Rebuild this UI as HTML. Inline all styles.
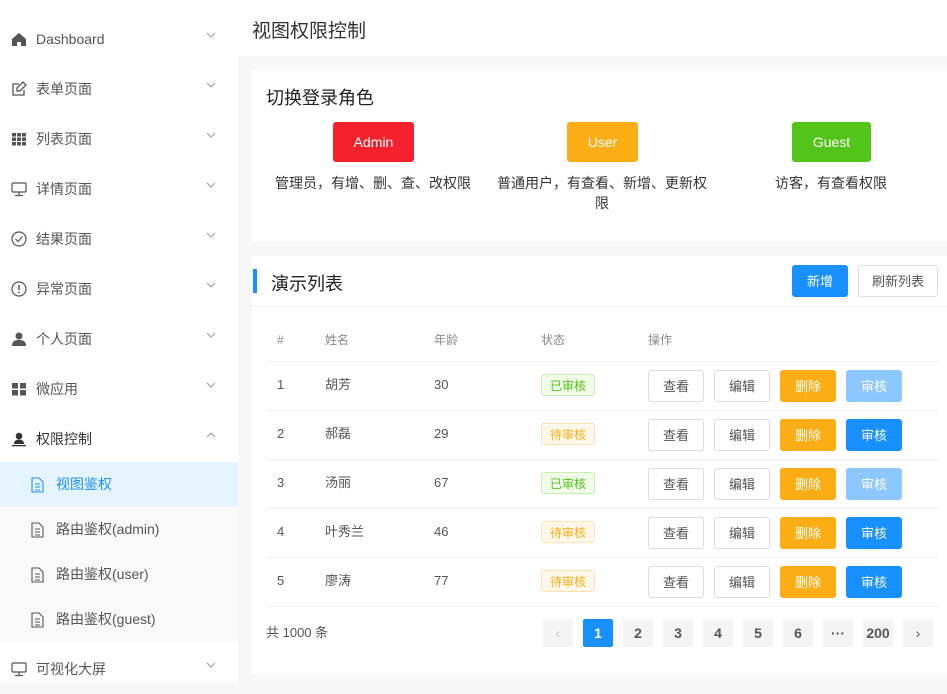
<!DOCTYPE html>
<html><head><meta charset="utf-8"><style>
*{box-sizing:border-box;margin:0;padding:0}
body{width:947px;height:683px;overflow:hidden;background:#f7f7f7;font-family:"Liberation Sans","Noto Sans CJK SC",sans-serif;color:#333;position:relative}
.abs{position:absolute}
#side{left:0;top:0;width:238px;height:683px;background:#fff}
.mi{position:absolute;left:0;width:238px;height:50px;font-size:14px;color:#555}
.mi .ic{position:absolute;left:11px;width:16px;height:16px;top:17px}
.mi .tx{position:absolute;left:36px;top:15px;line-height:20px}
.mi .ch{position:absolute;left:204px;top:16px;width:14px;height:10px}
.sub{position:absolute;left:0;width:238px;height:45px;font-size:14px;color:#555}
.sub .tx{position:absolute;left:56px;top:12px;line-height:20px}
.sub svg{position:absolute;left:31px;top:15px}
.card{position:absolute;background:#fff;left:252px;width:695px}
.btn{position:absolute;height:32px;border-radius:3px;font-size:13px;display:flex;align-items:center;justify-content:center;line-height:1}
.wb{border:1px solid #ddd;color:#555;background:#fff}
.tag{position:absolute;width:54px;height:22px;border-radius:3px;font-size:12px;display:flex;align-items:center;justify-content:center}
.g{background:#f0fbe8;border:1px solid #c9edb0;color:#52c41a}
.o{background:#fff8ea;border:1px solid #ffe2ad;color:#faad14}
.cell{position:absolute;font-size:13px;color:#555;line-height:20px;height:20px}
.pg{position:absolute;top:619px;width:30px;height:28px;background:#f4f4f5;border-radius:2px;font-size:14px;font-weight:bold;color:#555;display:flex;align-items:center;justify-content:center}
.line{position:absolute;left:266px;width:672px;height:1px;background:#ebeef5}
</style></head><body>
<svg width="0" height="0" style="position:absolute"><defs><symbol id="dn" viewBox="0 0 14 10"><path d="M3 3l4 4 4-4" fill="none" stroke="#999" stroke-width="1"/></symbol><symbol id="up" viewBox="0 0 14 10"><path d="M3 7l4-4 4 4" fill="none" stroke="#999" stroke-width="1"/></symbol></defs></svg>
<div id="side" class="abs">
 <div class="mi" style="top:14px"><svg class="ic" viewBox="0 0 16 16"><path d="M8 2L1 8v7h5v-4h4v4h5V8z" fill="#555"/></svg><span class="tx">Dashboard</span><svg class="ch"><use href="#dn"/></svg></div>
 <div class="mi" style="top:64px"><svg class="ic" viewBox="0 0 16 16"><path d="M13 9v5H2V3h6M12 1l3 3-6 6H6V7z" fill="none" stroke="#555" stroke-width="1.3"/></svg><span class="tx">表单页面</span><svg class="ch"><use href="#dn"/></svg></div>
 <div class="mi" style="top:114px"><svg class="ic" viewBox="0 0 16 16" fill="#555"><rect x="1" y="2" width="4" height="3.5"/><rect x="6" y="2" width="4" height="3.5"/><rect x="11" y="2" width="4" height="3.5"/><rect x="1" y="6.5" width="4" height="3.5"/><rect x="6" y="6.5" width="4" height="3.5"/><rect x="11" y="6.5" width="4" height="3.5"/><rect x="1" y="11" width="4" height="3.5"/><rect x="6" y="11" width="4" height="3.5"/><rect x="11" y="11" width="4" height="3.5"/></svg><span class="tx">列表页面</span><svg class="ch"><use href="#dn"/></svg></div>
 <div class="mi" style="top:164px"><svg class="ic" viewBox="0 0 16 16"><rect x="1" y="2" width="14" height="9" rx="1" fill="none" stroke="#555" stroke-width="1.2"/><path d="M8 11v3M4 14.5h8" stroke="#555" stroke-width="1.2"/></svg><span class="tx">详情页面</span><svg class="ch"><use href="#dn"/></svg></div>
 <div class="mi" style="top:214px"><svg class="ic" viewBox="0 0 16 16"><circle cx="8" cy="8" r="7" fill="none" stroke="#555" stroke-width="1.2"/><path d="M4.5 8l2.5 2.5 4.5-5" fill="none" stroke="#555" stroke-width="1.2"/></svg><span class="tx">结果页面</span><svg class="ch"><use href="#dn"/></svg></div>
 <div class="mi" style="top:264px"><svg class="ic" viewBox="0 0 16 16"><circle cx="8" cy="8" r="7" fill="none" stroke="#555" stroke-width="1.2"/><path d="M8 4v5" stroke="#555" stroke-width="1.5"/><circle cx="8" cy="11.5" r=".9" fill="#555"/></svg><span class="tx">异常页面</span><svg class="ch"><use href="#dn"/></svg></div>
 <div class="mi" style="top:314px"><svg class="ic" viewBox="0 0 16 16" fill="#555"><circle cx="8" cy="5" r="3.5"/><path d="M1 15c0-5 3-6 7-6s7 1 7 6z"/></svg><span class="tx">个人页面</span><svg class="ch"><use href="#dn"/></svg></div>
 <div class="mi" style="top:364px"><svg class="ic" viewBox="0 0 16 16" fill="#555"><rect x="1" y="2" width="6" height="5.5"/><rect x="9" y="2" width="6" height="5.5"/><rect x="1" y="9" width="6" height="5.5"/><rect x="9" y="9" width="6" height="5.5"/></svg><span class="tx">微应用</span><svg class="ch"><use href="#dn"/></svg></div>
 <div class="mi" style="top:414px;color:#333"><svg class="ic" viewBox="0 0 16 16" fill="#333"><circle cx="8" cy="5" r="3.3"/><path d="M3 13c0-3 2-4.5 5-4.5s5 1.5 5 4.5z"/><rect x="1" y="14" width="14" height="1.3"/></svg><span class="tx">权限控制</span><svg class="ch"><use href="#up"/></svg></div>
 <div class="abs" style="left:0;top:462px;width:238px;height:179px;background:#f9f9f9"></div>
 <div class="sub" style="top:462px;background:#e6f4ff;color:#1890ff"><svg width="13" height="16" viewBox="0 0 13 16"><path d="M1 1h7l4 4v10H1z M4 7h5M4 10h5M4 13h5" fill="none" stroke="#1890ff" stroke-width="1.1"/></svg><span class="tx">视图鉴权</span></div>
 <div class="sub" style="top:507px"><svg width="13" height="16" viewBox="0 0 13 16"><path d="M1 1h7l4 4v10H1z M4 7h5M4 10h5M4 13h5" fill="none" stroke="#555" stroke-width="1.1"/></svg><span class="tx">路由鉴权(admin)</span></div>
 <div class="sub" style="top:552px"><svg width="13" height="16" viewBox="0 0 13 16"><path d="M1 1h7l4 4v10H1z M4 7h5M4 10h5M4 13h5" fill="none" stroke="#555" stroke-width="1.1"/></svg><span class="tx">路由鉴权(user)</span></div>
 <div class="sub" style="top:597px"><svg width="13" height="16" viewBox="0 0 13 16"><path d="M1 1h7l4 4v10H1z M4 7h5M4 10h5M4 13h5" fill="none" stroke="#555" stroke-width="1.1"/></svg><span class="tx">路由鉴权(guest)</span></div>
 <div class="mi" style="top:644px"><svg class="ic" viewBox="0 0 16 16"><rect x="1" y="2" width="14" height="9" rx="1" fill="none" stroke="#555" stroke-width="1.2"/><path d="M8 11v3M4 14.5h8" stroke="#555" stroke-width="1.2"/></svg><span class="tx">可视化大屏</span><svg class="ch"><use href="#dn"/></svg></div>
</div>
<div class="abs" style="left:238px;top:0;width:709px;height:56px;background:#fff"></div>
<div class="abs" style="left:252px;top:16px;font-size:19px;color:#333">视图权限控制</div>

<div class="card" style="top:70px;height:171px">
 <div class="abs" style="left:14px;top:14px;font-size:18px;color:#222">切换登录角色</div>
 <div class="btn" style="left:81px;top:52px;width:81px;height:40px;background:#f5222d;color:#fff;font-size:14px">Admin</div>
 <div class="btn" style="left:315px;top:52px;width:71px;height:40px;background:#faad14;color:#fff;font-size:14px">User</div>
 <div class="btn" style="left:540px;top:52px;width:79px;height:40px;background:#52c41a;color:#fff;font-size:14px">Guest</div>
 <div class="abs" style="left:16px;top:103px;width:210px;text-align:center;font-size:14px;line-height:20px;color:#333">管理员，有增、删、查、改权限</div>
 <div class="abs" style="left:240px;top:103px;width:220px;text-align:center;font-size:14px;line-height:20px;color:#333">普通用户，有查看、新增、更新权限</div>
 <div class="abs" style="left:474px;top:103px;width:210px;text-align:center;font-size:14px;line-height:20px;color:#333">访客，有查看权限</div>
</div>

<div class="card" style="top:256px;height:418px"></div>
<div class="abs" style="left:253px;top:269px;width:4px;height:24px;background:#1890ff"></div>
<div class="abs" style="left:271px;top:270px;font-size:18px;color:#222">演示列表</div>
<div class="btn" style="left:792px;top:265px;width:56px;background:#1890ff;color:#fff">新增</div>
<div class="btn wb" style="left:858px;top:265px;width:80px">刷新列表</div>
<div class="abs" style="left:252px;top:306px;width:695px;height:1px;background:#ebeef5"></div>

<div class="cell" style="left:277px;top:330px;font-size:12px;color:#888">#</div>
<div class="cell" style="left:325px;top:330px;font-size:12px;color:#888">姓名</div>
<div class="cell" style="left:434px;top:330px;font-size:12px;color:#888">年龄</div>
<div class="cell" style="left:541px;top:330px;font-size:12px;color:#888">状态</div>
<div class="cell" style="left:648px;top:330px;font-size:12px;color:#888">操作</div>
<div class="line" style="top:361px"></div>

<div class="cell" style="left:277px;top:375px">1</div><div class="cell" style="left:325px;top:375px">胡芳</div><div class="cell" style="left:434px;top:375px">30</div>
<div class="tag g" style="left:541px;top:374px">已审核</div>
<div class="btn wb" style="left:648px;top:370px;width:56px">查看</div><div class="btn wb" style="left:714px;top:370px;width:56px">编辑</div><div class="btn" style="left:780px;top:370px;width:56px;background:#faad14;color:#fff">删除</div><div class="btn" style="left:846px;top:370px;width:56px;background:#8cc8ff;color:#fff">审核</div>
<div class="line" style="top:410px"></div>

<div class="cell" style="left:277px;top:424px">2</div><div class="cell" style="left:325px;top:424px">郝磊</div><div class="cell" style="left:434px;top:424px">29</div>
<div class="tag o" style="left:541px;top:423px">待审核</div>
<div class="btn wb" style="left:648px;top:419px;width:56px">查看</div><div class="btn wb" style="left:714px;top:419px;width:56px">编辑</div><div class="btn" style="left:780px;top:419px;width:56px;background:#faad14;color:#fff">删除</div><div class="btn" style="left:846px;top:419px;width:56px;background:#1890ff;color:#fff">审核</div>
<div class="line" style="top:459px"></div>

<div class="cell" style="left:277px;top:473px">3</div><div class="cell" style="left:325px;top:473px">汤丽</div><div class="cell" style="left:434px;top:473px">67</div>
<div class="tag g" style="left:541px;top:472px">已审核</div>
<div class="btn wb" style="left:648px;top:468px;width:56px">查看</div><div class="btn wb" style="left:714px;top:468px;width:56px">编辑</div><div class="btn" style="left:780px;top:468px;width:56px;background:#faad14;color:#fff">删除</div><div class="btn" style="left:846px;top:468px;width:56px;background:#8cc8ff;color:#fff">审核</div>
<div class="line" style="top:508px"></div>

<div class="cell" style="left:277px;top:522px">4</div><div class="cell" style="left:325px;top:522px">叶秀兰</div><div class="cell" style="left:434px;top:522px">46</div>
<div class="tag o" style="left:541px;top:521px">待审核</div>
<div class="btn wb" style="left:648px;top:517px;width:56px">查看</div><div class="btn wb" style="left:714px;top:517px;width:56px">编辑</div><div class="btn" style="left:780px;top:517px;width:56px;background:#faad14;color:#fff">删除</div><div class="btn" style="left:846px;top:517px;width:56px;background:#1890ff;color:#fff">审核</div>
<div class="line" style="top:557px"></div>

<div class="cell" style="left:277px;top:571px">5</div><div class="cell" style="left:325px;top:571px">廖涛</div><div class="cell" style="left:434px;top:571px">77</div>
<div class="tag o" style="left:541px;top:570px">待审核</div>
<div class="btn wb" style="left:648px;top:566px;width:56px">查看</div><div class="btn wb" style="left:714px;top:566px;width:56px">编辑</div><div class="btn" style="left:780px;top:566px;width:56px;background:#faad14;color:#fff">删除</div><div class="btn" style="left:846px;top:566px;width:56px;background:#1890ff;color:#fff">审核</div>
<div class="line" style="top:606px"></div>

<div class="cell" style="left:266px;top:623px">共 1000 条</div>
<div class="pg" style="left:543px;color:#c0c4cc;font-weight:normal">‹</div>
<div class="pg" style="left:583px;background:#1890ff;color:#fff">1</div>
<div class="pg" style="left:623px">2</div>
<div class="pg" style="left:663px">3</div>
<div class="pg" style="left:703px">4</div>
<div class="pg" style="left:743px">5</div>
<div class="pg" style="left:783px">6</div>
<div class="pg" style="left:823px">···</div>
<div class="pg" style="left:863px">200</div>
<div class="pg" style="left:903px;font-weight:normal">›</div>
</body></html>
